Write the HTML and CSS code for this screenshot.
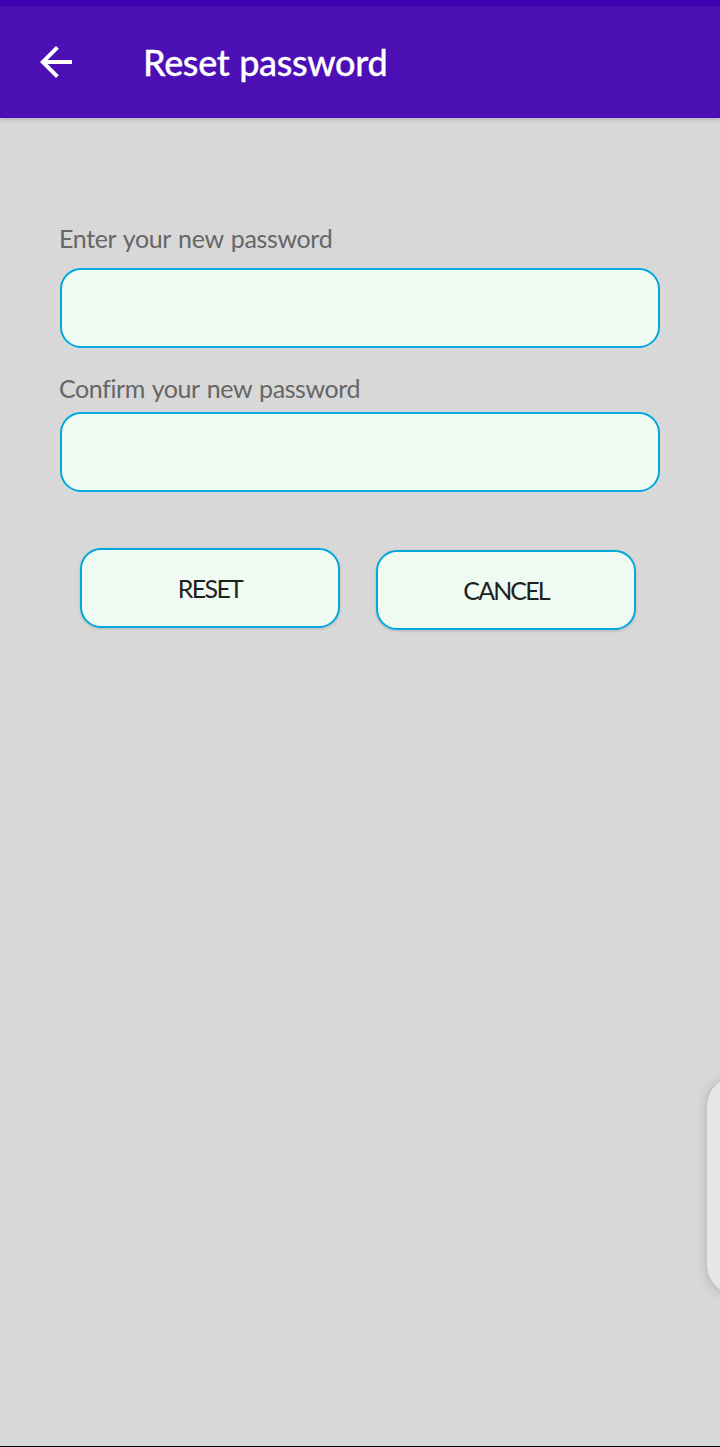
FILE: index.html
```html
<!DOCTYPE html>
<html lang="en">
<head>
<meta charset="utf-8">
<title>Reset password</title>
<link rel="stylesheet" href="styles.css">
</head>
<body>
<div class="screen">
  <header class="toolbar">
    <svg class="back" viewBox="4 4 16 16" aria-label="Back"><path d="M20 11H7.83l5.59-5.59L12 4l-8 8 8 8 1.41-1.41L7.83 13H20z"/></svg>
    <h1 class="title">Reset password</h1>
  </header>
  <main class="form">
    <label class="label label-new" for="new">Enter your new password</label>
    <input class="field" id="new" type="password">
    <label class="label label-confirm" for="confirm">Confirm your new password</label>
    <input class="field" id="confirm" type="password">
    <div class="actions">
      <button class="button reset" type="button">RESET</button>
      <button class="button cancel" type="button">CANCEL</button>
    </div>
  </main>
  <div class="edge-panel"></div>
</div>
</body>
</html>
```
FILE: styles.css
```css
* { box-sizing: border-box; }
body { margin: 0; font-family: Lato, "Open Sans", sans-serif; }
.screen {
  position: relative;
  height: 1447px;
  overflow: hidden;
  background: #d8d8d8;
  border-bottom: 1px solid #000;
}
.toolbar {
  display: flex;
  align-items: center;
  height: 118px;
  padding: 0 40px;
  gap: 71px;
  background: #4c0fb4;
  border-top: 6px solid #3f00b0;
  box-shadow: 0 1px 5px rgba(0, 0, 0, .22);
}
.back { width: 32px; height: 32px; fill: #fff; }
.title {
  margin: 0;
  font-size: 36px;
  line-height: 44px;
  font-weight: 500;
  -webkit-text-stroke: .3px #fff;
  letter-spacing: -.35px;
  word-spacing: 1px;
  color: #fff;
  white-space: nowrap;
}
.form { display: flex; flex-direction: column; padding: 103px 60px 0; }
.label {
  height: 34px;
  margin-left: -1px;
  font-size: 25px;
  line-height: 34px;
  color: #666;
  white-space: nowrap;
}
.label-new { margin-bottom: 13px; letter-spacing: -.35px; word-spacing: 1.5px; }
.label-confirm { margin-top: 23px; margin-bottom: 7px; letter-spacing: -.42px; word-spacing: 1.5px; }
.field, .button {
  height: 80px;
  border: 2px solid #02a9dc;
  border-radius: 21px;
  background: #effaf2;
}
.field { width: 100%; margin: 0; padding: 0 20px; font: inherit; outline: 0; }
.actions { display: flex; gap: 36px; padding: 56px 20px 0; }
.button {
  flex: none;
  width: 260px;
  padding: 0 0 1px;
  font: 25px/30px Lato, "Open Sans", sans-serif;
  color: #1d221f;
  box-shadow: 0 1px 3px rgba(0, 0, 0, .16);
}
.reset { letter-spacing: -1.7px; }
.cancel { margin-top: 2px; letter-spacing: -1.9px; }
.edge-panel {
  position: absolute;
  left: 707px;
  top: 1077px;
  width: 60px;
  height: 217px;
  border-radius: 28px;
  background: #e6e6e6;
  box-shadow: 0 0 1px rgba(0, 0, 0, .25), 0 1px 12px rgba(0, 0, 0, .18);
}
```
